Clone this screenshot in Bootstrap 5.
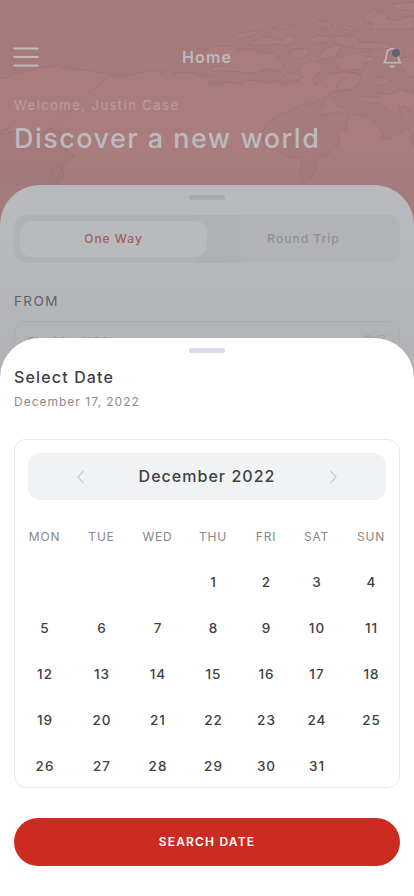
<!DOCTYPE html>
<html lang="en">
<head>
<meta charset="utf-8">
<meta name="viewport" content="width=device-width, initial-scale=1">
<title>Select Date</title>
<link href="https://cdn.jsdelivr.net/npm/bootstrap@5.3.0/dist/css/bootstrap.min.css" rel="stylesheet">
<style>
  body{font-family:Inter,"Liberation Sans",sans-serif;color:#404143;background:#fff;line-height:1.2}
  .screen{width:414px;height:896px}
  .hero{height:185px;color:#bcbabd}
  .world-map{left:0;top:0;z-index:0}
  .topbar{height:30px;margin-top:42px;padding:0 12px 0 13px}
  .page-title{font-size:16px;font-weight:600;letter-spacing:1.1px;margin:1px 7px 0 0}
  .intro{padding:0 14px}
  .welcome{font-size:13px;letter-spacing:1.45px;color:#bd9c99;margin-top:25px;line-height:16px}
  .headline{font-size:27px;font-weight:500;letter-spacing:1.46px;line-height:34px;margin-top:9px}
  .under{background:linear-gradient(#b8babd,#b6b8bb 90px,#b2b3b7 155px);border-radius:40px 40px 0 0;height:200px;padding:10px 14px 0}
  .behind{background:#a57a7b}
  .grip{width:36px;height:5px;border-radius:2.5px;background:#d4dde8}
  .under .grip{background:#a5aab5}
  .switcher{height:48px;margin-top:15px;padding:6px;border-radius:12px;background:linear-gradient(90deg,#b0b2b5 0,#b0b2b5 45%,#adb1b4 52%,#aeb2b5 58.500%,#b1b3b6 59%);font-size:12px;font-weight:500;letter-spacing:1px;color:#8e9093}
  .switch-on{width:187px;height:36px;border-radius:12px;background:#b8babd;color:#aa5c5c}
  .switch-off{padding-left:6px}
  .from-label{font-size:13.500px;font-weight:400;letter-spacing:1.4px;color:#626366;margin-top:30px;line-height:16px}
  .from-field{height:50px;margin-top:12px;border:1px solid #abacb0;border-radius:12px;padding:13px 12px 0 13px;font-size:12px;letter-spacing:.95px;color:#8f9093}
  .sheet{height:558px;margin-top:-47px;background:#fff;border-radius:40px 40px 0 0;padding:10px 14px 0;z-index:2}
  .sheet-title{font-size:16px;font-weight:500;letter-spacing:1.15px;line-height:20px;margin-top:14px}
  .sheet-sub{font-size:12px;letter-spacing:1px;line-height:16px;margin-top:7px;color:#8a8b8d}
  .calendar{height:349px;margin-top:29px;border:1px solid #e8e9ea;border-radius:12px;padding:13px}
  .month{height:47px;border-radius:12px;background:#f1f2f4;font-size:16px;font-weight:500;letter-spacing:1.03px;padding:0 48px}
  .days{display:grid;grid-template-columns:56px 58px 54px 57px 49px 52px 57px;grid-template-rows:45px;grid-auto-rows:46px;margin:14px 0 0 -11px;text-align:center;font-size:13.500px;font-weight:500;letter-spacing:1px;align-items:center}
  .weekday{font-size:12px;font-weight:400;color:#86878a;letter-spacing:.8px;padding:1px 1px 0 0}
  .btn-search{height:48px;margin-top:30px;background:#cc2b22;color:#fff;font-size:12px;font-weight:600;letter-spacing:1.18px}
</style>
<script src="https://cdn.jsdelivr.net/npm/bootstrap@5.3.0/dist/js/bootstrap.bundle.min.js"></script>
</head>
<body>
<main class="screen overflow-hidden position-relative">
  <div class="behind">
    <header class="hero position-relative overflow-hidden">
      <svg class="world-map position-absolute" width="414" height="185" viewBox="0 0 414 185" stroke="#996f71" stroke-width=".6" stroke-linejoin="round">
        <defs><linearGradient id="shade" x2="0" y2="1"><stop offset="0" stop-color="#806f72" stop-opacity="0"/><stop offset="1" stop-color="#806f72" stop-opacity=".16"/></linearGradient></defs>
        <path fill="#a97d7e" d="M-2 79 6 78 15 74 26 71 38 68 50 67 58 65 63 68 71 69 92 71 102 73 110 74 121 77 130 75 138 73 155 71 160 70 161 73 170 69 173 74 182 72 192 73 206 77 215 76 208 83 218 85 227 82 240 84 246 80 258 81 267 83 273 81 290 85 300 80 303 76 298 69 306 63 312 61 321 63 323 69 317 74 313 80 315 86 330 74 340 72 355 73 361 77 358 84 350 90 333 91 322 99 310 104 300 105 292 110 277 115 266 124 262 135 265 146 275 150 289 157 303 158 300 168 299 175 304 183 311 179 316 169 318 159 329 153 338 145 340 139 337 134 346 129 347 122 351 115 363 115 372 119 383 133 382 137 388 139 400 133 408 127 411 137 416 154V190H-2Z"/>
        <path fill="#a57a7b" d="M-2 134 9 129 10 127-2 131V135L15 131 28 130 40 133 50 129 60 132 64 139 70 143 66 147 66 150 75 156 67 163 63 161 62 169 64 177 58 180 60 190H-2Z"/>
        <path fill="none" d="M111 74 80 101 50 129M51 181 53 168 62 166 61 174 54 180M62 139 73 137"/>
        <path fill="#a97d7e" d="M201 53 213 46 232 46 240 50 253 49 259 53 275 53 279 60 285 66 276 71 267 69 257 73 240 72 225 71 212 71 211 67 224 66 217 61 207 60ZM233 38 240 33 261 30 253 36 239 39ZM248 44 257 40 265 36 281 41 286 36 294 36 296 42 288 44 287 46 276 44 256 46ZM272 28 281 25 297 25 287 29ZM315 23 319 20 331 23 332 28 325 29 317 26ZM338 27 345 25 356 29 357 31 343 29ZM364 15 375 10 388 14 387 19 400 21 402 17 414 16V29L369 29 374 24 364 21ZM390 5 401 3 416 2V11L397 9ZM311 39 317 35 332 37 328 42 315 44ZM333 36 344 37 355 36 359 42 386 43 392 45 391 49 358 49 344 46 332 43 337 40ZM288 53 295 49 305 49 308 46 309 53 300 59 291 57ZM318 58 324 49 335 45 342 46 338 54 330 58 321 60ZM333 60 348 54 372 51 366 56 376 58 371 62 363 63 364 69 354 70 344 71 338 68ZM284 75 292 72 301 77 298 80 288 80ZM336 85 344 78 352 73 360 75 361 80 352 89 339 91ZM374 83 377 77 387 78 392 81 382 86ZM355 101 361 97 378 97 377 92 390 95 399 90 414 91 416 115 404 106 399 108 402 115 390 112 378 103 363 102ZM406 92 409 88 416 91V94ZM318 113 325 102 332 97 338 106 348 111 346 115 342 112 332 112 322 116ZM399 53 404 50 402 58 416 55V78L407 75 403 67 396 64Z"/>
        <path fill="url(#shade)" stroke="none" d="M0 145h414v40H0z"/>
      </svg>
      <div class="position-relative">
        <div class="topbar d-flex align-items-center justify-content-between">
          <svg width="26" height="20" fill="none" stroke="#bdb9bc" stroke-width="1.800" stroke-linecap="round"><path d="M1 1.500h24M1 10h24M1 18.500h24"/></svg>
          <span class="page-title">Home</span>
          <svg width="20" height="22" fill="none" stroke="#bdb9bc" stroke-width="1.600" stroke-linejoin="round"><path d="M2 16.700h16.500c-1.800-2-2.400-5-2.600-8.700C15.600 4.500 13.500 2.700 10.200 2.700S4.900 4.500 4.600 8C4.400 11.700 3.800 14.700 2 16.700Z"/><path d="M8 19.600q2.200 2.200 4.400 0" stroke-width="1.900"/><circle cx="14" cy="7" r="4" fill="#5e6570" stroke="none"/></svg>
        </div>
        <div class="intro"><p class="welcome mb-0">Welcome, Justin Case</p><h1 class="headline mb-0">Discover a new world</h1></div>
      </div>
    </header>
    <section class="under">
      <div class="grip mx-auto"></div>
      <div class="switcher d-flex"><div class="switch-on d-flex align-items-center justify-content-center">One Way</div><div class="switch-off flex-fill d-flex align-items-center justify-content-center">Round Trip</div></div>
      <div class="from-label">FROM</div>
      <div class="from-field d-flex justify-content-between align-items-start"><span>Florida, USA</span>
        <svg width="24" height="20" fill="none" stroke="#a2a4a7" stroke-width="1.400"><path d="M1 2q4-2 8 0l3 1 4-2q4-2 6 0c1 2-2 3-5 5L6 12 2 8"/></svg>
      </div>
    </section>
  </div>
  <section class="sheet position-relative">
    <div class="grip mx-auto"></div>
    <h2 class="sheet-title mb-0">Select Date</h2>
    <p class="sheet-sub mb-0">December 17, 2022</p>
    <div class="calendar">
      <div class="month d-flex align-items-center justify-content-between">
        <svg width="9" height="14" fill="none" stroke="#ced0d2" stroke-width="1.500"><path d="m7.500 1-5.500 6 5.500 6"/></svg>
        <span>December 2022</span>
        <svg width="9" height="14" fill="none" stroke="#ced0d2" stroke-width="1.500"><path d="m1.500 1 5.500 6-5.500 6"/></svg>
      </div>
      <div class="days">
        <span class="weekday">MON</span><span class="weekday">TUE</span><span class="weekday">WED</span><span class="weekday">THU</span><span class="weekday">FRI</span><span class="weekday">SAT</span><span class="weekday">SUN</span>
        <span></span><span></span><span></span><span>1</span><span>2</span><span>3</span><span>4</span>
        <span>5</span><span>6</span><span>7</span><span>8</span><span>9</span><span>10</span><span>11</span>
        <span>12</span><span>13</span><span>14</span><span>15</span><span>16</span><span>17</span><span>18</span>
        <span>19</span><span>20</span><span>21</span><span>22</span><span>23</span><span>24</span><span>25</span>
        <span>26</span><span>27</span><span>28</span><span>29</span><span>30</span><span>31</span><span></span>
      </div>
    </div>
    <button class="btn btn-search w-100 rounded-pill border-0">SEARCH DATE</button>
  </section>
</main>
</body>
</html>
